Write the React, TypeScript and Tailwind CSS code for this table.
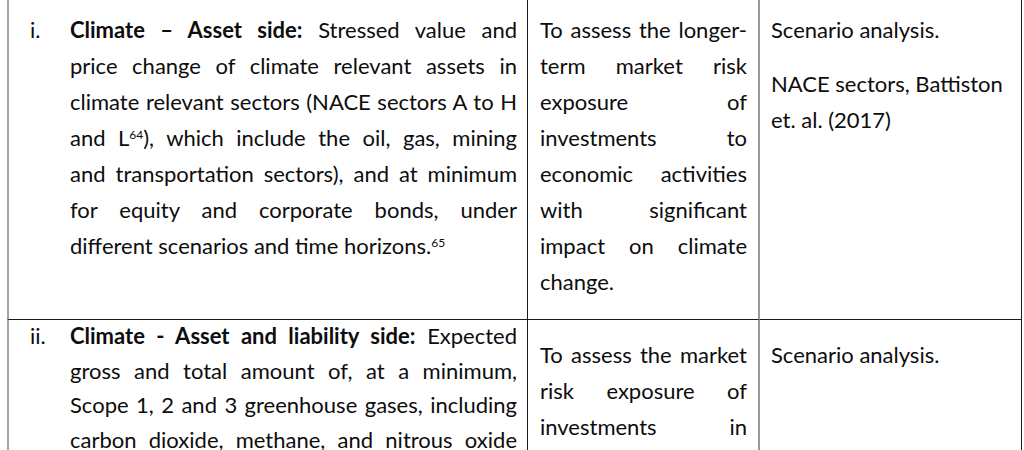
import React from 'react';

type Line = React.ReactNode;

// a justified block where each line break is fixed, last line left aligned
const Lines: React.FC<{ lines: Line[] }> = ({ lines }) => (
  <div>
    {lines.map((line, i) => (
      <div
        key={i}
        className={i < lines.length - 1 ? 'text-justify [text-align-last:justify] whitespace-nowrap' : 'text-left whitespace-nowrap'}
      >
        {line}
      </div>
    ))}
  </div>
);

const Sup: React.FC<{ children: React.ReactNode }> = ({ children }) => (
  <sup className="text-[12px] relative top-[1px] align-super leading-none">{children}</sup>
);

const App: React.FC = () => {
  return (
    <div className="h-[450px] w-[1024px] overflow-hidden bg-white text-[#0d0d0d] font-['Lato','Open_Sans',sans-serif] text-[22px] leading-[36px]">
      <div className="pl-[7px] grid grid-cols-[521px_232px_262px]">
        {/* row 1 */}
        <div className="border-l-2 border-[#a3a3a3] border-r border-r-[#1a1a1a] border-b border-b-[#1a1a1a] pt-[12px] pl-[21px] pr-[10px] flex">
          <span className="w-[40px] shrink-0">i.</span>
          <div className="flex-1 min-w-0">
            <Lines
              lines={[
                <><b>Climate – Asset side:</b> Stressed value and</>,
                'price change of climate relevant assets in',
                'climate relevant sectors (NACE sectors A to H',
                <>and L<Sup>64</Sup>), which include the oil, gas, mining</>,
                'and transportation sectors), and at minimum',
                'for equity and corporate bonds, under',
                <>different scenarios and time horizons.<Sup>65</Sup></>,
              ]}
            />
          </div>
        </div>
        <div className="border-r-2 border-r-[#9a9a9a] border-b border-b-[#1a1a1a] pt-[12px] pb-[19px] pl-[12px] pr-[11px]">
          <Lines
            lines={[
              'To assess the longer-',
              'term market risk',
              'exposure of',
              'investments to',
              'economic activities',
              'with significant',
              'impact on climate',
              'change.',
            ]}
          />
        </div>
        <div className="border-r border-r-[#1a1a1a] border-b border-b-[#1a1a1a] pt-[12px] pl-[11px] pr-[8px]">
          <p>Scenario analysis.</p>
          <p className="mt-[18px]">NACE sectors, Battiston</p>
          <p>et. al. (2017)</p>
        </div>

        {/* row 2 */}
        <div className="border-l-2 border-[#a3a3a3] border-r border-r-[#1a1a1a] pl-[21px] pr-[10px] flex leading-[34.6px]">
          <span className="w-[40px] shrink-0 -mt-[1px]">ii.</span>
          <div className="flex-1 min-w-0 -mt-[1px]">
            <Lines
              lines={[
                <><b>Climate - Asset and liability side:</b> Expected</>,
                'gross and total amount of, at a minimum,',
                'Scope 1, 2 and 3 greenhouse gases, including',
                'carbon dioxide, methane, and nitrous oxide',
                'emissions, of the assets and liabilities',
              ]}
            />
          </div>
        </div>
        <div className="border-r-2 border-r-[#9a9a9a] pt-[17px] pl-[12px] pr-[11px]">
          <Lines
            lines={[
              'To assess the market',
              'risk exposure of',
              'investments in',
              'carbon intensive',
              'sectors.',
            ]}
          />
        </div>
        <div className="border-r border-r-[#1a1a1a] pt-[17px] pl-[11px] pr-[8px]">
          <p>Scenario analysis.</p>
        </div>
      </div>
    </div>
  );
};

export default App;
